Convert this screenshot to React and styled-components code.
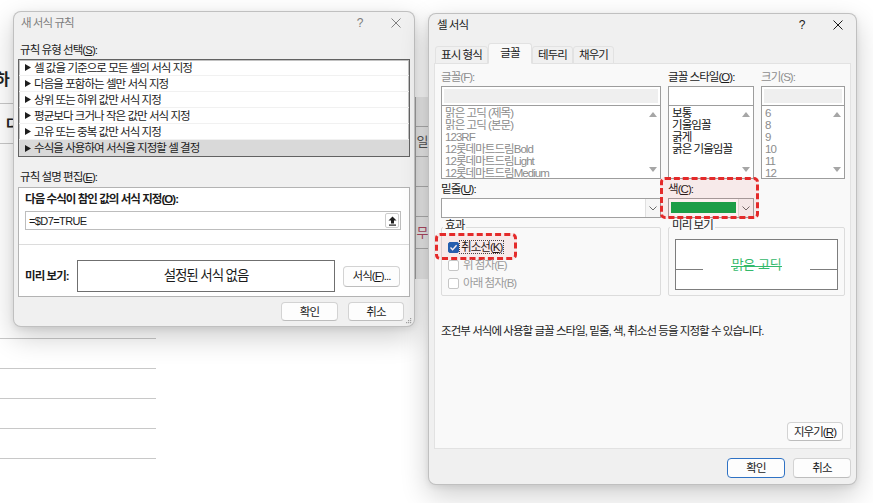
import styled, { createGlobalStyle } from 'styled-components';

const GlobalStyle = createGlobalStyle`
  html, body {
    margin: 0;
    padding: 0;
    background: #ffffff;
  }
  body {
    font-family: "Liberation Sans", "Noto Sans CJK KR", sans-serif;
    font-size: 11.5px;
    line-height: 14px;
    letter-spacing: -0.95px;
    color: #1b1b1b;
  }
  * {
    box-sizing: border-box;
  }
`;

const RULE_TYPES = [
  '셀 값을 기준으로 모든 셀의 서식 지정',
  '다음을 포함하는 셀만 서식 지정',
  '상위 또는 하위 값만 서식 지정',
  '평균보다 크거나 작은 값만 서식 지정',
  '고유 또는 중복 값만 서식 지정',
  '수식을 사용하여 서식을 지정할 셀 결정',
];

const FONTS = [
  '맑은 고딕 (제목)',
  '맑은 고딕 (본문)',
  '123RF',
  '12롯데마트드림Bold',
  '12롯데마트드림Light',
  '12롯데마트드림Medium',
];

const STYLES = ['보통', '기울임꼴', '굵게', '굵은 기울임꼴'];
const SIZES = ['6', '8', '9', '10', '11', '12'];

const TABS = [
  { label: '표시 형식', w: 53 },
  { label: '글꼴', w: 44, active: true },
  { label: '테두리', w: 41 },
  { label: '채우기', w: 41 },
];

/* ---------- desktop + sheet behind ---------- */

const Desktop = styled.div`
  position: relative;
  width: 873px;
  height: 503px;
  overflow: hidden;
  background: #ffffff;
`;

const SheetColumn = styled.div`
  position: absolute;
  left: ${p => p.$x}px;
  top: ${p => p.$y}px;
  width: ${p => p.$w}px;
  display: flex;
  flex-direction: column;
  overflow: hidden;
  background: ${p => p.$bg || 'transparent'};
  border-left: ${p => (p.$edge ? '1px solid #a6a6a6' : 'none')};
`;

const SheetRow = styled.div`
  flex: none;
  height: ${p => p.$h}px;
  display: flex;
  align-items: center;
  justify-content: ${p => (p.$center ? 'center' : 'flex-start')};
  border-bottom: ${p => (p.$line ? `1px solid ${p.$lineColor || '#c8c8c8'}` : 'none')};
  white-space: nowrap;
  letter-spacing: 0;
`;

const SheetGlyph = styled.span`
  margin-left: ${p => p.$shift || 0}px;
  font-size: ${p => p.$size || 13}px;
  font-weight: ${p => (p.$bold ? 700 : 400)};
  color: ${p => p.$color || '#222'};
`;

/* ---------- dialog frame ---------- */

const Dialog = styled.div`
  position: absolute;
  left: ${p => p.$x}px;
  top: ${p => p.$y}px;
  width: ${p => p.$w}px;
  height: ${p => p.$h}px;
  display: flex;
  flex-direction: column;
  background: #f0f0f0;
  border: 1px solid rgba(0, 0, 0, 0.2);
  border-radius: 8px;
  box-shadow: 0 10px 28px rgba(0, 0, 0, 0.2), 0 2px 6px rgba(0, 0, 0, 0.08);
`;

const TitleBar = styled.div`
  flex: none;
  height: 22px;
  display: flex;
  align-items: center;
  padding-left: ${p => p.$pad}px;
  color: ${p => (p.$active ? '#1a1a1a' : '#7d7d7d')};
`;

const TitleText = styled.div`
  flex: 1;
`;

const CaptionButton = styled.div`
  width: 36px;
  height: 22px;
  display: flex;
  align-items: center;
  justify-content: center;
  font-size: 12px;
  letter-spacing: 0;
`;

const DialogBody = styled.div`
  flex: 1;
  display: flex;
  flex-direction: column;
  padding: 0 ${p => p.$pr}px 0 ${p => p.$pl}px;
`;

const FieldLabel = styled.div`
  flex: none;
  margin-top: ${p => p.$top || 0}px;
  padding-left: ${p => p.$indent || 0}px;
  height: 14px;
  line-height: 14px;
  white-space: nowrap;
  color: ${p => (p.$muted ? '#8e8e8e' : '#1b1b1b')};
  font-weight: ${p => (p.$bold ? 700 : 400)};
`;

const ButtonRow = styled.div`
  flex: none;
  display: flex;
  justify-content: flex-end;
  gap: ${p => p.$gap}px;
  margin-top: ${p => p.$top}px;
  padding-right: ${p => p.$pr}px;
`;

const PushButton = styled.div`
  flex: none;
  width: ${p => p.$w}px;
  height: ${p => p.$h || 19}px;
  display: flex;
  align-items: center;
  justify-content: center;
  background: #fdfdfd;
  border: 1px solid ${p => (p.$default ? '#2f72c4' : '#d3d3d3')};
  border-bottom-color: ${p => (p.$default ? '#2f72c4' : '#bdbdbd')};
  border-radius: 4px;
  white-space: nowrap;
  color: #1b1b1b;
`;

const ResizeGrip = styled.svg`
  position: absolute;
  right: 2px;
  bottom: 2px;
`;

/* ---------- rule dialog parts ---------- */

const RuleList = styled.div`
  flex: none;
  margin-top: 2px;
  height: 98px;
  background: #ffffff;
  border: 1px solid #626262;
  box-shadow: inset 0 0 0 1px #c2c2c2;
`;

const RuleItem = styled.div`
  height: 16px;
  display: flex;
  align-items: center;
  padding-left: 6px;
  gap: 3px;
  white-space: nowrap;
  background: ${p => (p.$selected ? '#d9d9d9' : 'transparent')};
  border-bottom: ${p => (p.$selected ? 'none' : '1px solid #f1f1f1')};
`;

const RuleBox = styled.div`
  flex: none;
  margin-top: 3px;
  height: 110px;
  display: flex;
  flex-direction: column;
  background: #ffffff;
  border: 1px solid #b3b3b3;
`;

const FormulaInput = styled.div`
  flex: none;
  margin: 5px 8px 0 6px;
  height: 19px;
  display: flex;
  align-items: center;
  padding-left: 3px;
  border: 1px solid #bdbdbd;
  font-size: 11px;
  letter-spacing: -0.6px;
`;

const CollapseButton = styled.div`
  margin-left: auto;
  margin-right: 1px;
  width: 14px;
  height: 15px;
  display: flex;
  align-items: center;
  justify-content: center;
  border: 1px solid #cdcdcd;
  border-radius: 2px;
`;

const Separator = styled.div`
  flex: none;
  margin-top: 14px;
  height: 1px;
  background: #dcdcdc;
`;

const PreviewRow = styled.div`
  display: flex;
  align-items: center;
  padding: 15px 0 0 6px;
`;

const PreviewLabel = styled.div`
  flex: none;
  width: 52px;
  font-weight: 700;
  white-space: nowrap;
`;

const PreviewBox = styled.div`
  flex: none;
  width: 258px;
  height: 32px;
  display: flex;
  align-items: center;
  justify-content: center;
  border: 1px solid #6f6f6f;
  font-size: 13.5px;
  letter-spacing: -1.1px;
`;

const SideButton = styled(PushButton)`
  margin-left: 8px;
`;

/* ---------- cell format dialog parts ---------- */

const TabRow = styled.div`
  position: relative;
  z-index: 1;
  flex: none;
  margin-top: 7px;
  padding-left: 1px;
  height: 21px;
  display: flex;
  align-items: flex-end;
`;

const Tab = styled.div`
  flex: none;
  width: ${p => p.$w}px;
  height: ${p => (p.$active ? 21 : 18)}px;
  display: flex;
  align-items: center;
  justify-content: center;
  padding-bottom: ${p => (p.$active ? 2 : 0)}px;
  background: ${p => (p.$active ? '#f9f9f9' : '#f0f0f0')};
  border: 1px solid #e2e2e2;
  border-bottom-color: ${p => (p.$active ? '#f9f9f9' : '#e2e2e2')};
  border-radius: 3px 3px 0 0;
  white-space: nowrap;
`;

const TabPanel = styled.div`
  flex: none;
  margin-top: -1px;
  height: 386px;
  display: flex;
  flex-direction: column;
  padding: 6px 5px 7px 6px;
  background: #f9f9f9;
  border: 1px solid #e2e2e2;
`;

const FontGrid = styled.div`
  display: grid;
  grid-template-columns: 220px 86px 84px;
  column-gap: 7px;
  row-gap: 3px;
`;

const Cell = styled.div`
  position: relative;
  display: flex;
  flex-direction: column;
`;

const FieldInput = styled.div`
  margin-top: 2px;
  height: 20px;
  border: 1px solid #9d9d9d;
  background: ${p => (p.$disabled ? '#efefef' : '#ffffff')};
  box-shadow: ${p => (p.$disabled ? 'inset 0 0 0 2px #ffffff' : 'none')};
`;

const ChoiceList = styled.div`
  margin-top: -1px;
  height: 74px;
  display: flex;
  background: #ffffff;
  border: 1px solid #9d9d9d;
`;

const ChoiceItems = styled.div`
  flex: 1;
  padding: 1px 3px 0;
  overflow: hidden;
`;

const ChoiceItem = styled.div`
  height: 12px;
  line-height: 12px;
  white-space: nowrap;
  color: ${p => (p.$muted ? '#8c8c8c' : '#141414')};
`;

const ScrollTrack = styled.div`
  flex: none;
  width: 14px;
  display: flex;
  flex-direction: column;
  align-items: center;
  justify-content: space-between;
  padding: 6px 0;
`;

const Dropdown = styled.div`
  margin-top: 2px;
  height: 20px;
  display: flex;
  background: #ffffff;
  border: 1px solid #a0a0a0;
`;

const DropdownValue = styled.div`
  flex: 1;
`;

const Swatch = styled.div`
  flex: 1;
  margin: 3px 2px 4px 2px;
  background: ${p => p.$color};
`;

const ChevronCell = styled.div`
  flex: none;
  width: 15px;
  display: flex;
  align-items: center;
  justify-content: center;
  background: #f6f6f6;
  border-left: 1px solid #e0e0e0;
`;

const Highlight = styled.div`
  position: absolute;
  left: ${p => p.$l}px;
  top: ${p => p.$t}px;
  width: ${p => p.$w}px;
  height: ${p => p.$h}px;
  border: 3px dashed #e42a2a;
  border-radius: 5px;
  background: rgba(228, 42, 42, 0.07);
  pointer-events: none;
`;

const GroupRow = styled.div`
  margin-top: 2px;
  display: grid;
  grid-template-columns: 220px 177px;
  column-gap: 7px;
`;

const Group = styled.fieldset`
  margin: 0;
  min-width: 0;
  height: 76px;
  padding: ${p => p.$pad};
  border: 1px solid #dcdcdc;
  border-radius: 2px;

  legend {
    position: relative;
    top: -2px;
    margin-left: -5px;
    padding: 0 2px;
    line-height: 14px;
    color: #1b1b1b;
  }
`;

const CheckRow = styled.div`
  position: relative;
  height: 18px;
  display: flex;
  align-items: center;
  gap: 1px;
  white-space: nowrap;
  color: ${p => (p.$disabled ? '#9b9b9b' : '#141414')};
`;

const CheckBox = styled.span`
  flex: none;
  width: 11px;
  height: 11px;
  display: flex;
  align-items: center;
  justify-content: center;
  border-radius: 2px;
  background: ${p => (p.$checked ? '#1862b8' : '#ffffff')};
  border: 1px solid ${p => (p.$checked ? '#1862b8' : '#c6c6c6')};
  margin-right: ${p => (p.$checked ? 0 : 3)}px;
`;

const FocusText = styled.span`
  padding: 0 1px;
  line-height: 12px;
  outline: 1px dotted #444;
  outline-offset: 0;
`;

const SampleCanvas = styled.div`
  height: 51px;
  display: flex;
  align-items: flex-start;
  background: #ffffff;
  border: 1px solid #7d7d7d;
`;

const SampleRule = styled.div`
  flex: none;
  width: 27px;
  height: 1px;
  margin-top: 29px;
  background: #7d7d7d;
`;

const SampleText = styled.div`
  flex: 1;
  margin-top: 17px;
  line-height: 16px;
  text-align: center;
  font-size: 13px;
  letter-spacing: -0.4px;
  color: #34b96b;
`;

/* strike-through drawn as a 1px band across the words */
const Struck = styled.span`
  display: inline-block;
  padding: 0 1px;
  background: linear-gradient(#34b96b, #34b96b) no-repeat 0 9px / 100% 1px;
`;

const Description = styled.div`
  margin-top: 28px;
  white-space: nowrap;
  color: #1b1b1b;
`;

const ClearButton = styled(PushButton)`
  margin-top: auto;
  margin-right: 2px;
  align-self: flex-end;
`;

/* ---------- small drawings ---------- */

function CloseIcon({ color }) {
  return (
    <svg width="10" height="10" viewBox="0 0 10 10">
      <path d="M0.5 0.5 L9.5 9.5 M9.5 0.5 L0.5 9.5" stroke={color} strokeWidth="1" />
    </svg>
  );
}

function RuleArrow() {
  return (
    <svg width="6" height="7" viewBox="0 0 6 7">
      <polygon points="0,0 6,3.5 0,7" fill="#1e1e1e" />
    </svg>
  );
}

function UploadIcon() {
  return (
    <svg width="9" height="10" viewBox="0 0 9 10">
      <path d="M4.5 0.5 L8.5 4.5 H6 V7.5 H3 V4.5 H0.5 Z" fill="#1e1e1e" />
      <rect x="1" y="8.5" width="7" height="1.2" fill="#1e1e1e" />
    </svg>
  );
}

function ScrollArrow({ down }) {
  return (
    <svg width="8" height="5" viewBox="0 0 8 5">
      <polygon points={down ? '0,0 8,0 4,5' : '0,5 8,5 4,0'} fill="#a6a6a6" />
    </svg>
  );
}

function Chevron() {
  return (
    <svg width="8" height="5" viewBox="0 0 8 5">
      <polyline points="0.5,0.5 4,4 7.5,0.5" fill="none" stroke="#6a6a6a" strokeWidth="1" />
    </svg>
  );
}

function CheckMark() {
  return (
    <svg width="9" height="9" viewBox="0 0 9 9">
      <polyline points="1.5,4.6 3.6,6.7 7.6,2.3" fill="none" stroke="#ffffff" strokeWidth="1.4" />
    </svg>
  );
}

function Grip() {
  const dots = [[5, 1], [3, 3], [5, 3], [1, 5], [3, 5], [5, 5]];
  return (
    <ResizeGrip width="7" height="7" viewBox="0 0 7 7">
      {dots.map(([x, y]) => (
        <rect key={`${x}-${y}`} x={x} y={y} width="1.2" height="1.2" fill="#a0a0a0" />
      ))}
    </ResizeGrip>
  );
}

function FontChoice({ label, muted, disabledInput, items, mutedItems }) {
  return (
    <Cell>
      <FieldLabel $muted={muted}>{label}</FieldLabel>
      <FieldInput $disabled={disabledInput} />
      <ChoiceList>
        <ChoiceItems>
          {items.map(item => (
            <ChoiceItem key={item} $muted={mutedItems}>{item}</ChoiceItem>
          ))}
        </ChoiceItems>
        <ScrollTrack>
          <ScrollArrow />
          <ScrollArrow down />
        </ScrollTrack>
      </ChoiceList>
    </Cell>
  );
}

export default function App() {
  return (
    <Desktop>
      <GlobalStyle />

      {/* worksheet behind the dialogs */}
      <SheetColumn $x={0} $y={0} $w={156}>
        <SheetRow $h={56} />
        <SheetRow $h={48} $line>
          <SheetGlyph $shift={-5} $size={16} $bold>하</SheetGlyph>
        </SheetRow>
        <SheetRow $h={40} $line>
          <SheetGlyph $shift={6} $size={14} $bold>다</SheetGlyph>
        </SheetRow>
        <SheetRow $h={195} $line />
        <SheetRow $h={30} $line />
        <SheetRow $h={30} $line />
        <SheetRow $h={30} $line />
        <SheetRow $h={30} $line />
      </SheetColumn>

      <SheetColumn $x={415} $y={97} $w={14} $bg="#ededed" $edge>
        <SheetRow $h={30} $line $lineColor="#b0b0b0" />
        <SheetRow $h={30} $line $lineColor="#b0b0b0" $center>
          <SheetGlyph $size={13} $color="#555">일</SheetGlyph>
        </SheetRow>
        <SheetRow $h={30} $line $lineColor="#b0b0b0" />
        <SheetRow $h={30} $line $lineColor="#b0b0b0" />
        <SheetRow $h={32} $line $lineColor="#b0b0b0" $center>
          <SheetGlyph $size={13} $color="#b04a64">무</SheetGlyph>
        </SheetRow>
        <SheetRow $h={30} />
      </SheetColumn>

      {/* 새 서식 규칙 */}
      <Dialog $x={13} $y={11} $w={402} $h={316}>
        <TitleBar $pad={7}>
          <TitleText>새 서식 규칙</TitleText>
          <CaptionButton>?</CaptionButton>
          <CaptionButton>
            <CloseIcon color="#808080" />
          </CaptionButton>
        </TitleBar>
        <DialogBody $pl={4} $pr={4}>
          <FieldLabel $top={9} $indent={2}>규칙 유형 선택(<u>S</u>):</FieldLabel>
          <RuleList>
            {RULE_TYPES.map((type, i) => (
              <RuleItem key={type} $selected={i === RULE_TYPES.length - 1}>
                <RuleArrow />
                {type}
              </RuleItem>
            ))}
          </RuleList>

          <FieldLabel $top={13} $indent={2}>규칙 설명 편집(<u>E</u>):</FieldLabel>
          <RuleBox>
            <FieldLabel $top={4} $indent={6} $bold>다음 수식이 참인 값의 서식 지정(<u>O</u>):</FieldLabel>
            <FormulaInput>
              =$D7=TRUE
              <CollapseButton>
                <UploadIcon />
              </CollapseButton>
            </FormulaInput>
            <Separator />
            <PreviewRow>
              <PreviewLabel>미리 보기:</PreviewLabel>
              <PreviewBox>설정된 서식 없음</PreviewBox>
              <SideButton $w={57} $h={21}>서식(<u>F</u>)...</SideButton>
            </PreviewRow>
          </RuleBox>

          <ButtonRow $top={5} $gap={10} $pr={6}>
            <PushButton $w={57}>확인</PushButton>
            <PushButton $w={56}>취소</PushButton>
          </ButtonRow>
        </DialogBody>
        <Grip />
      </Dialog>

      {/* 셀 서식 */}
      <Dialog $x={428} $y={13} $w={429} $h={472}>
        <TitleBar $pad={8} $active>
          <TitleText>셀 서식</TitleText>
          <CaptionButton>?</CaptionButton>
          <CaptionButton>
            <CloseIcon color="#1a1a1a" />
          </CaptionButton>
        </TitleBar>
        <DialogBody $pl={5} $pr={5}>
          <TabRow>
            {TABS.map(tab => (
              <Tab key={tab.label} $w={tab.w} $active={tab.active}>{tab.label}</Tab>
            ))}
          </TabRow>

          <TabPanel>
            <FontGrid>
              <FontChoice label="글꼴(F):" muted disabledInput items={FONTS} mutedItems />
              <FontChoice label={<>글꼴 스타일(<u>O</u>):</>} items={STYLES} />
              <FontChoice label="크기(S):" muted disabledInput items={SIZES} mutedItems />

              <Cell>
                <FieldLabel>밑줄(<u>U</u>):</FieldLabel>
                <Dropdown>
                  <DropdownValue />
                  <ChevronCell>
                    <Chevron />
                  </ChevronCell>
                </Dropdown>
              </Cell>
              <Cell>
                <FieldLabel>색(<u>C</u>):</FieldLabel>
                <Dropdown>
                  <Swatch $color="#0fa64a" />
                  <ChevronCell>
                    <Chevron />
                  </ChevronCell>
                </Dropdown>
                <Highlight $l={-8} $t={-5} $w={99} $h={42} />
              </Cell>
              <Cell />
            </FontGrid>

            <GroupRow>
              <Group $pad="4px 6px 3px 6px">
                <legend>효과</legend>
                <CheckRow>
                  <CheckBox $checked>
                    <CheckMark />
                  </CheckBox>
                  <FocusText>취소선(<u>K</u>)</FocusText>
                  <Highlight $l={-13} $t={-5} $w={82} $h={27} />
                </CheckRow>
                <CheckRow $disabled>
                  <CheckBox />
                  위 첨자(E)
                </CheckRow>
                <CheckRow $disabled>
                  <CheckBox />
                  아래 첨자(B)
                </CheckRow>
              </Group>

              <Group $pad="5px 6px 5px 6px">
                <legend>미리 보기</legend>
                <SampleCanvas>
                  <SampleRule />
                  <SampleText>
                    <Struck>맑은 고딕</Struck>
                  </SampleText>
                  <SampleRule />
                </SampleCanvas>
              </Group>
            </GroupRow>

            <Description>
              조건부 서식에 사용할 글꼴 스타일, 밑줄, 색, 취소선 등을 지정할 수 있습니다.
            </Description>

            <ClearButton $w={56}>지우기(<u>R</u>)</ClearButton>
          </TabPanel>

          <ButtonRow $top={9} $gap={8} $pr={0}>
            <PushButton $w={58} $h={20} $default>확인</PushButton>
            <PushButton $w={58} $h={20}>취소</PushButton>
          </ButtonRow>
        </DialogBody>
      </Dialog>
    </Desktop>
  );
}
